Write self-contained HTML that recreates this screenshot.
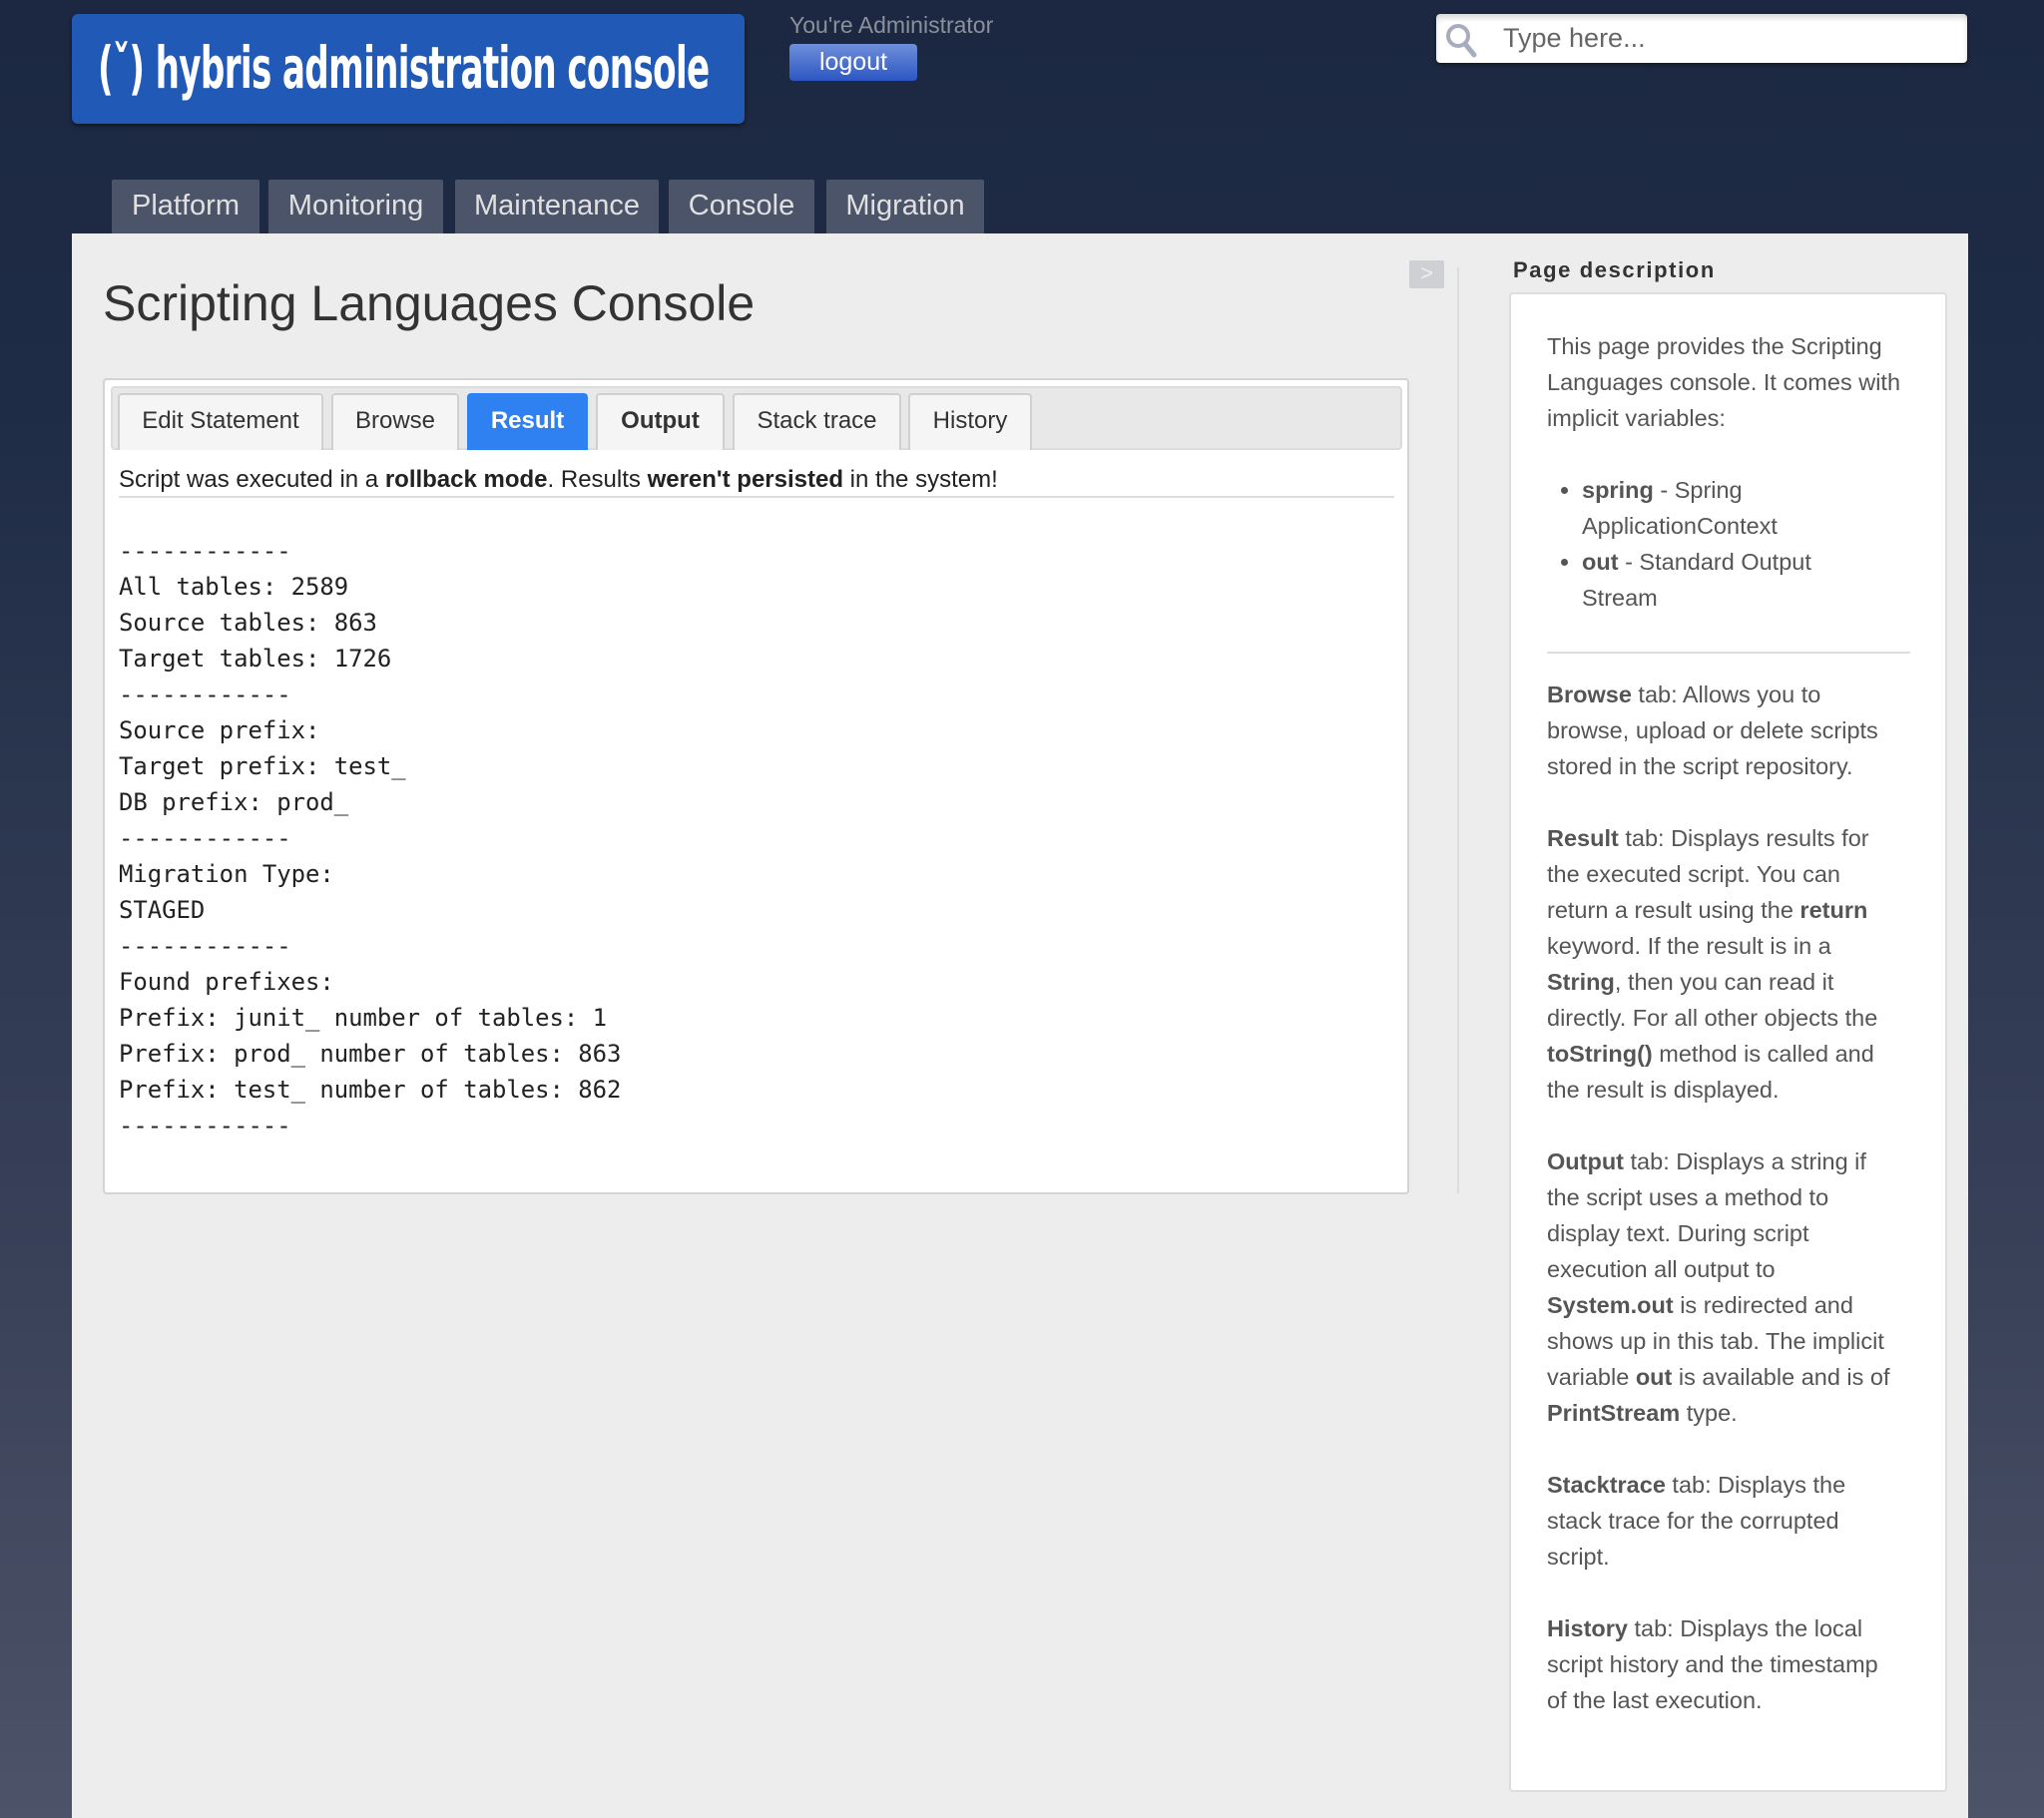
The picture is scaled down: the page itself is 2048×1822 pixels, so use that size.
<!DOCTYPE html>
<html><head><meta charset="utf-8"><style>
*{box-sizing:border-box;margin:0;padding:0}
html,body{width:2048px;height:1822px;overflow:hidden}
body{background:linear-gradient(#1c2841 0px,#1f2c46 400px,#3a425a 1300px,#4d5368 1822px);font-family:"Liberation Sans",sans-serif;position:relative}
.abs{position:absolute}
#logo{left:72px;top:14px;width:674px;height:110px;background:#2159b6;border-radius:6px;box-shadow:0 2px 4px rgba(0,0,0,.5)}
#logo span{position:absolute;left:26px;top:20px;font-family:"DejaVu Sans Condensed","DejaVu Sans",sans-serif;font-weight:bold;font-size:58px;color:#fff;white-space:nowrap;transform:scaleX(.655);transform-origin:left top;letter-spacing:-1px}
#admin{left:791px;top:12px;font-size:23px;color:#8b909c}
#logout{left:791px;top:44px;width:128px;height:37px;border-radius:4px;background:linear-gradient(#6f8fdb,#2c56c2);color:#fff;font-size:25px;text-align:center;line-height:36px}
#search{left:1439px;top:14px;width:532px;height:49px;background:#fff;border-radius:4px;box-shadow:inset 0 4px 6px rgba(0,0,0,.15),0 2px 4px rgba(0,0,0,.4)}
#search span{position:absolute;left:67px;top:9px;font-size:27px;color:#666}
.nav{top:180px;height:54px;background:#4b5468;color:#e0e0e0;font-size:29px;line-height:52px;text-align:center;border-radius:2px 2px 0 0}
#main{left:72px;top:234px;width:1900px;height:1588px;background:#ededed}
h1{position:absolute;left:103px;top:275px;font-weight:normal;font-size:50px;color:#333}
#toggle{left:1412px;top:261px;width:35px;height:28px;background:#cfd0d4;border-radius:2px;color:#eee;font-size:22px;text-align:center;line-height:26px}
#vline{left:1460px;top:268px;width:2px;height:928px;background:#ddd}
#panel{left:103px;top:379px;width:1309px;height:818px;background:#fff;border:2px solid #d3d3d3;border-radius:4px}
#strip{left:111px;top:387px;width:1294px;height:64px;background:#e8e8e8;border:2px solid #dcdcdc;border-radius:4px}
.tab{top:394px;height:57px;background:#f5f5f5;border:2px solid #d0d0d0;border-bottom:none;border-radius:4px 4px 0 0;font-size:24px;color:#333;text-align:center;line-height:52px}
.tab.act{background:#2f81f2;border-color:#2f81f2;color:#fff;font-weight:bold}
#info{left:119px;top:467px;font-size:24px;color:#222}
#rule{left:119px;top:497px;width:1278px;height:2px;background:#ddd}
pre{position:absolute;left:119px;top:534px;font-family:"DejaVu Sans Mono","Liberation Mono",monospace;font-size:23.9px;line-height:36px;color:#222}
#ph{left:1516px;top:258px;font-weight:bold;font-size:22px;letter-spacing:1.6px;color:#333}
#box{left:1512px;top:293px;width:439px;height:1503px;background:#fff;border:2px solid #ddd;border-radius:4px}
#desc{left:1550px;top:329px;width:380px;font-size:23.5px;line-height:36px;color:#555}
#desc p{margin-bottom:36px}
#desc ul{margin:0 0 36px 35px}
#desc hr{border:none;height:2px;background:#ddd;margin:1px 0 23px 0;width:364px}
</style></head><body>
<div id="logo" class="abs"><span>(ˇ) hybris administration console</span></div>
<div id="admin" class="abs">You're Administrator</div>
<div id="logout" class="abs">logout</div>
<div id="search" class="abs"><svg class="abs" style="left:8px;top:8px" width="36" height="36" viewBox="0 0 36 36"><circle cx="14" cy="14" r="10" fill="none" stroke="#a8adbd" stroke-width="4"/><path d="M21 22 L30 33" stroke="#a8adbd" stroke-width="5" stroke-linecap="round"/></svg><span>Type here...</span></div>
<div class="abs nav" style="left:112px;width:148px">Platform</div>
<div class="abs nav" style="left:269px;width:175px">Monitoring</div>
<div class="abs nav" style="left:456px;width:204px">Maintenance</div>
<div class="abs nav" style="left:670px;width:146px">Console</div>
<div class="abs nav" style="left:828px;width:158px">Migration</div>
<div id="main" class="abs"></div>
<h1>Scripting Languages Console</h1>
<div id="toggle" class="abs">&gt;</div>
<div id="vline" class="abs"></div>
<div id="panel" class="abs"></div>
<div id="strip" class="abs"></div>
<div class="abs tab" style="left:118px;width:206px">Edit Statement</div>
<div class="abs tab" style="left:332px;width:128px">Browse</div>
<div class="abs tab act" style="left:468px;width:121px">Result</div>
<div class="abs tab" style="left:597px;width:129px;font-weight:bold">Output</div>
<div class="abs tab" style="left:734px;width:169px">Stack trace</div>
<div class="abs tab" style="left:910px;width:124px">History</div>
<div id="info" class="abs">Script was executed in a <b>rollback mode</b>. Results <b>weren't persisted</b> in the system!</div>
<div id="rule" class="abs"></div>
<pre>------------
All tables: 2589
Source tables: 863
Target tables: 1726
------------
Source prefix: 
Target prefix: test_
DB prefix: prod_
------------
Migration Type: 
STAGED
------------
Found prefixes:
Prefix: junit_ number of tables: 1
Prefix: prod_ number of tables: 863
Prefix: test_ number of tables: 862
------------</pre>
<div id="ph" class="abs">Page description</div>
<div id="box" class="abs"></div>
<div id="desc" class="abs">
<p>This page provides the Scripting<br>Languages console. It comes with<br>implicit variables:</p>
<ul><li><b>spring</b> - Spring<br>ApplicationContext</li><li><b>out</b> - Standard Output<br>Stream</li></ul>
<hr>
<p><b>Browse</b> tab: Allows you to<br>browse, upload or delete scripts<br>stored in the script repository.</p>
<p><b>Result</b> tab: Displays results for<br>the executed script. You can<br>return a result using the <b>return</b><br>keyword. If the result is in a<br><b>String</b>, then you can read it<br>directly. For all other objects the<br><b>toString()</b> method is called and<br>the result is displayed.</p>
<p><b>Output</b> tab: Displays a string if<br>the script uses a method to<br>display text. During script<br>execution all output to<br><b>System.out</b> is redirected and<br>shows up in this tab. The implicit<br>variable <b>out</b> is available and is of<br><b>PrintStream</b> type.</p>
<p><b>Stacktrace</b> tab: Displays the<br>stack trace for the corrupted<br>script.</p>
<p><b>History</b> tab: Displays the local<br>script history and the timestamp<br>of the last execution.</p>
</div>
</body></html>
